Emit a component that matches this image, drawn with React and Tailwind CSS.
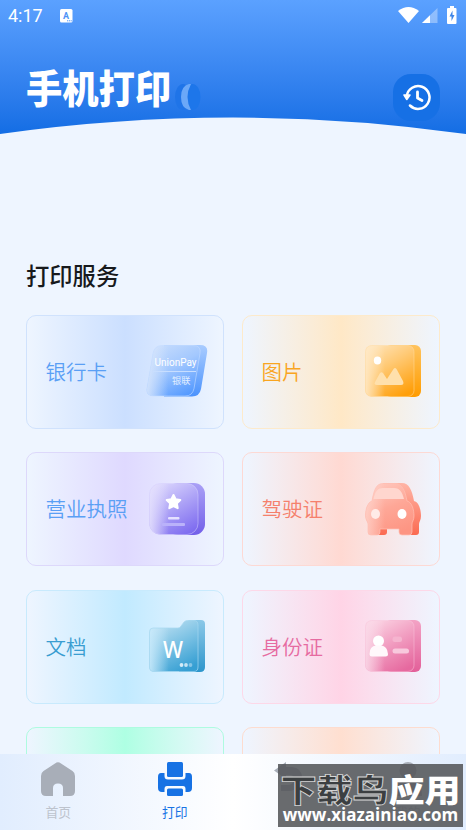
import React from "react"
import clsx from "clsx"

// Icons
function BankCardIcon() {
  return (
    <svg width="62" height="54" viewBox="0 0 62 54">
      <defs>
        <linearGradient id="bankBack" x1="0" y1="0" x2="0" y2="1">
          <stop offset="0" stopColor="#a9ccff" />
          <stop offset="1" stopColor="#4c93fd" />
        </linearGradient>
        <linearGradient id="bankFront" x1="0.2" y1="0" x2="0.75" y2="1">
          <stop offset="0" stopColor="#c6dcfd" />
          <stop offset="0.45" stopColor="#a3c8fe" />
          <stop offset="1" stopColor="#5399ff" />
        </linearGradient>
        <linearGradient id="bankFade" x1="0" y1="0" x2="1" y2="0">
          <stop offset="0" stopColor="#dbe8fc" stopOpacity="0.85" />
          <stop offset="0.4" stopColor="#dbe8fc" stopOpacity="0" />
        </linearGradient>
      </defs>
      <path d="M18 1H54Q62.500 1 61 9L55 45Q53.500 52.500 46 52.500H18Z" fill="url(#bankBack)" />
      <path
        d="M16 1.500H47Q55.500 1.500 54 9.500L48 44.500Q46.500 52 39 52H8Q-.5 52 1 44L7 9.500Q8.500 1.500 16 1.500Z"
        fill="url(#bankFront)"
      />
      <path
        d="M16 1.500H47Q55.500 1.500 54 9.500L48 44.500Q46.500 52 39 52H8Q-.5 52 1 44L7 9.500Q8.500 1.500 16 1.500Z"
        fill="url(#bankFade)"
        stroke="#c5dcff"
        strokeWidth=".6"
      />
      <path d="M7 27.500H50" stroke="#c8deff" strokeWidth="1" />
      <text x="8.500" y="21.500" fontSize="10" fill="#fff" textLength="42" lengthAdjust="spacingAndGlyphs" fontFamily="Roboto, sans-serif">
        UnionPay
      </text>
      <text x="26" y="39.500" fontSize="9.200" fill="#e2eeff" fontFamily="'Noto Sans CJK SC', sans-serif">
        银联
      </text>
    </svg>
  )
}

function PictureIcon() {
  return (
    <svg width="56" height="54" viewBox="0 0 56 54">
      <defs>
        <linearGradient id="picBack" x1="0" y1="0" x2="0" y2="1">
          <stop offset="0" stopColor="#ffc35d" />
          <stop offset="1" stopColor="#ff9c00" />
        </linearGradient>
        <linearGradient id="picFront" x1="0.2" y1="0" x2="0.75" y2="1">
          <stop offset="0" stopColor="#ffe2b4" />
          <stop offset="0.4" stopColor="#ffc974" />
          <stop offset="1" stopColor="#ff9f0a" />
        </linearGradient>
        <linearGradient id="picFade" x1="0" y1="0" x2="1" y2="0">
          <stop offset="0" stopColor="#ffe9c6" stopOpacity="0.9" />
          <stop offset="0.4" stopColor="#ffe9c6" stopOpacity="0" />
        </linearGradient>
      </defs>
      <rect x="20" y="1" width="36" height="52" rx="6" fill="url(#picBack)" />
      <rect x=".5" y="1.500" width="48.500" height="51" rx="6" fill="url(#picFront)" />
      <rect x=".5" y="1.500" width="48.500" height="51" rx="6" fill="url(#picFade)" stroke="#ffdca6" strokeWidth=".5" />
      <ellipse cx="12.500" cy="16.500" rx="3.700" ry="4" fill="#fff" />
      <path
        d="M10 38L15 29Q16.500 27.500 18 29L22 35L28.500 25Q30 23 31.500 25L38 37Q39.500 41 36 41H12Q8.500 41 10 38Z"
        fill="#ffe0ac"
      />
    </svg>
  )
}

function LicenseIcon() {
  return (
    <svg width="56" height="54" viewBox="0 0 56 54">
      <defs>
        <linearGradient id="licBack" x1="0" y1="0" x2="0" y2="1">
          <stop offset="0" stopColor="#aaa0f6" />
          <stop offset="1" stopColor="#725fe9" />
        </linearGradient>
        <linearGradient id="licFront" x1="0.2" y1="0" x2="0.75" y2="1">
          <stop offset="0" stopColor="#dcd7fd" />
          <stop offset="0.45" stopColor="#b1a7f7" />
          <stop offset="1" stopColor="#7f6df0" />
        </linearGradient>
        <linearGradient id="licFade" x1="0" y1="0" x2="1" y2="0">
          <stop offset="0" stopColor="#e4e0fd" stopOpacity="0.9" />
          <stop offset="0.4" stopColor="#e4e0fd" stopOpacity="0" />
        </linearGradient>
      </defs>
      <rect x="18" y="1" width="38" height="52" rx="11" fill="url(#licBack)" />
      <rect x=".5" y="1.500" width="48.500" height="51" rx="11" fill="url(#licFront)" />
      <rect x=".5" y="1.500" width="48.500" height="51" rx="11" fill="url(#licFade)" stroke="#d6d0fd" strokeWidth=".5" />
      <path
        d="M24.500 13L26.600 17.300L31.300 18L27.900 21.400L28.700 26.200L24.500 24L20.300 26.200L21.100 21.400L17.700 18L22.400 17.300Z"
        fill="#fff"
        stroke="#fff"
        strokeWidth="2"
        strokeLinejoin="round"
      />
      <rect x="19" y="35" width="11.500" height="2.500" rx="1" fill="#e5e1ff" />
      <rect x="13" y="41" width="23" height="3" rx="1" fill="#bab2fa" />
    </svg>
  )
}

function CarIcon() {
  return (
    <svg width="56" height="54" viewBox="0 0 56 54">
      <defs>
        <linearGradient id="carBack" x1="0" y1="0" x2="0" y2="1">
          <stop offset="0" stopColor="#ffb5a6" />
          <stop offset="1" stopColor="#fb6a51" />
        </linearGradient>
        <linearGradient id="carFront" x1="0.2" y1="0" x2="0.6" y2="1">
          <stop offset="0" stopColor="#ffc9bf" />
          <stop offset="0.5" stopColor="#fea797" />
          <stop offset="1" stopColor="#fd9583" />
        </linearGradient>
        <linearGradient id="carFade" x1="0" y1="0" x2="1" y2="0">
          <stop offset="0" stopColor="#ffd5cd" stopOpacity="0.8" />
          <stop offset="0.4" stopColor="#ffd5cd" stopOpacity="0" />
        </linearGradient>
      </defs>
      <path
        d="M18 1H37C44 1 47 8 49 19C54 20 56 28 56 34C56 38 54 40 54 42V50Q54 53 51 53H43L20 20ZM12 47H22V50Q22 53 19 53H12Z"
        fill="url(#carBack)"
      />
      <path
        d="M18 1.500H30C37 1.500 40 8 42 19C47 20 49 28 49 34C49 38 47 40 47 42V50Q47 53 44 53H37Q34 53 34 50V47H15V50Q15 53 12 53H6Q3 53 3 50V42C3 40 .5 38 .5 33C.5 27 3 20 7 19C9 8 11 1.500 18 1.500Z"
        fill="url(#carFront)"
      />
      <path
        d="M18 1.500H30C37 1.500 40 8 42 19C47 20 49 28 49 34C49 38 47 40 47 42V50Q47 53 44 53H37Q34 53 34 50V47H15V50Q15 53 12 53H6Q3 53 3 50V42C3 40 .5 38 .5 33C.5 27 3 20 7 19C9 8 11 1.500 18 1.500Z"
        fill="url(#carFade)"
        stroke="#ffc0b4"
        strokeWidth=".7"
      />
      <path d="M8.500 17C10 9 13 6 18 6H29C35 6 37 10 39 17H8.500Z" fill="#ffd6ce" />
      <ellipse cx="10.500" cy="32" rx="4.500" ry="5" fill="#ffebe7" />
      <ellipse cx="37" cy="32" rx="4.500" ry="5" fill="#fff" />
    </svg>
  )
}

function DocumentIcon() {
  return (
    <svg width="56" height="54" viewBox="0 0 56 54">
      <defs>
        <linearGradient id="docBack" x1="0" y1="0" x2="0" y2="1">
          <stop offset="0" stopColor="#8bc8e8" />
          <stop offset="1" stopColor="#2d96cc" />
        </linearGradient>
        <linearGradient id="docFront" x1="0.2" y1="0" x2="0.7" y2="1">
          <stop offset="0" stopColor="#c2e2f3" />
          <stop offset="0.5" stopColor="#7cc2e4" />
          <stop offset="1" stopColor="#369fd3" />
        </linearGradient>
        <linearGradient id="docFade" x1="0" y1="0" x2="1" y2="0">
          <stop offset="0" stopColor="#c9eafb" stopOpacity="0.9" />
          <stop offset="0.4" stopColor="#c9eafb" stopOpacity="0" />
        </linearGradient>
      </defs>
      <path d="M40 1H52Q56 1 56 5V48Q56 53 51 53H30L34 6Z" fill="url(#docBack)" />
      <path
        d="M4 9H29Q31 9 32 7L35 3Q36.500 1.500 38 1.500H45Q49 1.500 49 6V48Q49 52.500 45 52.500H5Q.5 52.500 .5 48V13Q.5 9 4 9Z"
        fill="url(#docFront)"
      />
      <path
        d="M4 9H29Q31 9 32 7L35 3Q36.500 1.500 38 1.500H45Q49 1.500 49 6V48Q49 52.500 45 52.500H5Q.5 52.500 .5 48V13Q.5 9 4 9Z"
        fill="url(#docFade)"
        stroke="#a8d9f0"
        strokeWidth=".7"
      />
      <text x="14" y="38.500" fontSize="23.500" fontWeight="500" fill="#fff" textLength="20" lengthAdjust="spacingAndGlyphs" fontFamily="'Noto Sans', sans-serif">
        W
      </text>
      <circle cx="32.500" cy="46" r="1.900" fill="#d4ecf8" />
      <circle cx="37" cy="46" r="1.900" fill="#c4e4f4" />
      <circle cx="41.500" cy="46" r="1.900" fill="#86c5e6" />
    </svg>
  )
}

function IdCardIcon() {
  return (
    <svg width="56" height="54" viewBox="0 0 56 54">
      <defs>
        <linearGradient id="idBack" x1="0" y1="0" x2="0" y2="1">
          <stop offset="0" stopColor="#f3a3c5" />
          <stop offset="1" stopColor="#e35f99" />
        </linearGradient>
        <linearGradient id="idFront" x1="0.2" y1="0" x2="0.75" y2="1">
          <stop offset="0" stopColor="#fbd3e3" />
          <stop offset="0.45" stopColor="#f2a1c3" />
          <stop offset="1" stopColor="#e6699f" />
        </linearGradient>
        <linearGradient id="idFade" x1="0" y1="0" x2="1" y2="0">
          <stop offset="0" stopColor="#fad9e8" stopOpacity="0.9" />
          <stop offset="0.4" stopColor="#fad9e8" stopOpacity="0" />
        </linearGradient>
      </defs>
      <rect x="20" y="1" width="36" height="52" rx="6" fill="url(#idBack)" />
      <rect x=".5" y="1.500" width="48.500" height="51" rx="6" fill="url(#idFront)" />
      <rect x=".5" y="1.500" width="48.500" height="51" rx="6" fill="url(#idFade)" stroke="#f9c6dc" strokeWidth=".5" />
      <circle cx="13.500" cy="22" r="5.500" fill="#fff" />
      <path d="M4.500 35Q4.500 27 11 26.500H16Q22.500 27 23 35Q23 37.500 20.500 37.500H7Q4.500 37.500 4.500 35Z" fill="#fff8fb" />
      <rect x="27.500" y="17.500" width="9.500" height="5.500" rx="2.500" fill="#f5b4cf" />
      <rect x="27.500" y="29.500" width="16.500" height="5" rx="2.500" fill="#f8c9dd" />
    </svg>
  )
}

function HomeIcon() {
  return (
    <svg width="34" height="34" viewBox="0 0 34 34" fill="#a8aeb8">
      <path d="M14 1.500Q17-.8 20 1.500L31.500 9Q34 10.700 34 14V29Q34 34 29 34H22V26Q22 21.500 17 21.500Q12 21.500 12 26V34H5Q0 34 0 29V14Q0 10.700 2.500 9Z" />
    </svg>
  )
}

function PrinterIcon() {
  return (
    <svg width="34" height="34" viewBox="0 0 34 34" fill="#1772e4">
      <rect x="9" y="0" width="16" height="15" rx="1.500" />
      <path d="M3 11H6.500V14Q6.500 17.500 10 17.500H24Q27.500 17.500 27.500 14V11H31Q34 11 34 15V26Q34 30 30 30H27.500V27Q27.500 24 25 24H9Q6.500 24 6.500 27V30H4Q0 30 0 26V15Q0 11 3 11Z" />
      <rect x="9" y="26.500" width="16" height="7.500" rx="1.500" />
    </svg>
  )
}

function ShareIcon() {
  return (
    <svg width="34" height="34" viewBox="0 0 34 34" fill="#a8aeb8">
      <path d="M0 8.500L12 0V5H18Q28 6 28 16Q28 28 15 29H7V23H15Q20 22 20 17Q20 13 16 13H12V17Z" />
    </svg>
  )
}

function UserIcon() {
  return (
    <svg width="34" height="34" viewBox="0 0 34 34" fill="#a8aeb8">
      <circle cx="17" cy="8.500" r="8.500" />
      <path d="M3 34Q3 19 17 19Q31 19 31 34Z" />
    </svg>
  )
}

const services = [
  {
    name: "银行卡",
    icon: <BankCardIcon />,
    border: "border-[#d0e2fd]",
    bg: "from-[#eef5ff] via-[#cbdfff] to-[#eef5ff]",
    text: "text-[#5a9ff5]",
    right: "pr-[15.500px]",
  },
  {
    name: "图片",
    icon: <PictureIcon />,
    border: "border-[#fdeacb]",
    bg: "from-[#eef5ff] via-[#ffe8c6] to-[#eef5ff]",
    text: "text-[#f9a51f]",
    right: "pr-[18.500px]",
  },
  {
    name: "营业执照",
    icon: <LicenseIcon />,
    border: "border-[#ddd8fb]",
    bg: "from-[#eef5ff] via-[#dfd9ff] to-[#eef5ff]",
    text: "text-[#5a9ff5]",
    right: "pr-[18.500px]",
  },
  {
    name: "驾驶证",
    icon: <CarIcon />,
    border: "border-[#fdd9d4]",
    bg: "from-[#eef5ff] via-[#ffd9d2] to-[#eef5ff]",
    text: "text-[#f5806c]",
    right: "pr-[18.500px]",
  },
  {
    name: "文档",
    icon: <DocumentIcon />,
    border: "border-[#c8eafd]",
    bg: "from-[#eef5ff] via-[#c1eaff] to-[#eef5ff]",
    text: "text-[#399dd1]",
    right: "pr-[18.500px]",
  },
  {
    name: "身份证",
    icon: <IdCardIcon />,
    border: "border-[#fdd8e8]",
    bg: "from-[#eef5ff] via-[#ffd4e6] to-[#eef5ff]",
    text: "text-[#e66ba1]",
    right: "pr-[18.500px]",
  },
  {
    border: "border-[#aefbe0]",
    bg: "from-[#eef5ff] via-[#aeffe3] to-[#eef5ff]",
  },
  {
    border: "border-[#fddccf]",
    bg: "from-[#eef5ff] via-[#ffdfd0] to-[#eef5ff]",
  },
]

const tabs = [
  { id: "home", label: "首页", icon: <HomeIcon /> },
  { id: "print", label: "打印", icon: <PrinterIcon />, active: true },
  { id: "share", label: "", icon: <ShareIcon /> },
  { id: "user", label: "我的", icon: <UserIcon /> },
]

function StatusBar() {
  return (
    <div className="flex h-8 items-center justify-between pl-[8px] pr-[9px] text-white">
      <div className="flex items-center gap-[17px]">
        <span className="font-[Roboto] text-[18px] leading-none">4:17</span>
        <svg width="13" height="14" viewBox="0 0 13 14">
          <rect width="12.500" height="13.500" rx="1.500" fill="#fff" />
          <text x="3" y="9.800" fontSize="9" fontWeight="700" fill="#4d94f7" fontFamily="Roboto, sans-serif">
            A
          </text>
          <path d="M7 11.800H12" stroke="#4d94f7" strokeWidth="1" strokeDasharray="1.200 .6" />
        </svg>
      </div>
      <div className="mt-[-2px] flex items-center">
        <svg width="21" height="16" viewBox="0 0 21 16" fill="#fff">
          <path d="M0 4Q10.500-4 21 4L10.500 16Z" />
        </svg>
        <svg className="ml-[3px]" width="16" height="15" viewBox="0 0 16 15" fill="#fff">
          <path d="M15.500 0V15H0Z" opacity=".35" />
          <path d="M8 7.300V15H0Z" />
        </svg>
        <svg className="ml-[9px]" width="10" height="18" viewBox="0 0 10 18">
          <path d="M3 0H7V2H8.500Q9.500 2 9.500 3V17Q9.500 18 8.500 18H1Q0 18 0 17V3Q0 2 1 2H3Z" fill="#fff" />
          <path d="M5.500 4.500L2.500 10.500H4.500V15L7.500 9H5.500Z" fill="#3f86e8" />
        </svg>
      </div>
    </div>
  )
}

function Header() {
  return (
    <header className="relative h-[135px] bg-gradient-to-b from-[#5ba1ff] to-[#126de4]">
      <svg className="absolute bottom-0 left-0" width="466" height="18" viewBox="0 0 466 18">
        <path d="M0 17Q233-16 466 17V18H0Z" fill="#eef5ff" />
      </svg>
      <StatusBar />
      <div className="relative flex items-start justify-between px-[26px] pt-[34px]">
        <div className="flex">
          <h1 className="mt-[-2px] h-[44px] origin-center scale-y-[1.06] whitespace-nowrap text-[36.300px] font-black leading-[44px] text-white">
            手机打印
          </h1>
          <svg className="ml-[4px] mt-[17px]" width="26" height="28" viewBox="0 0 26 28">
            <ellipse cx="8" cy="14" rx="8" ry="13" fill="#1f74e8" />
            <ellipse cx="17.500" cy="14" rx="8" ry="13" fill="#1d76ea" />
            <path d="M14 1Q6 3 6 14Q6 25 14 27H16Q9 14 16 1Z" fill="#6ba8f8" />
          </svg>
        </div>
        <button className="mt-[8px] flex h-[47px] w-[47px] items-center justify-center rounded-[18px] bg-[#1670e5]">
          <svg width="30" height="28" viewBox="0 0 30 28" fill="none" stroke="#fff" strokeWidth="2.500" strokeLinecap="round" strokeLinejoin="round">
            <path d="M4.800 12A11.400 11.400 0 1 1 8 21.500" />
            <path d="M2 11L8 11L4.800 15.500Z" fill="#fff" strokeWidth="1.500" />
            <path d="M15.500 8V14L20 16.500" strokeWidth="2.800" />
          </svg>
        </button>
      </div>
    </header>
  )
}

function ServiceCard({ service }) {
  return (
    <div
      className={clsx(
        "flex h-[114px] items-center justify-between rounded-[10px] border bg-gradient-to-r pl-[18.500px] pb-[1px]",
        service.border,
        service.bg,
        service.right
      )}
    >
      <span className={clsx("text-[20.500px] font-[350]", service.text)}>{service.name}</span>
      {service.icon}
    </div>
  )
}

function TabBar() {
  return (
    <nav className="grid h-[76px] shrink-0 grid-cols-4 bg-gradient-to-r from-[#e1edfe] via-white to-[#e1edfe]">
      {tabs.map((tab) => (
        <div key={tab.id} className="flex flex-col items-center pt-[8px]">
          {tab.icon}
          <span
            className={clsx(
              "mt-[6px] text-[12.800px] leading-[20px]",
              tab.active ? "text-[#1772e4]" : "text-[#bdc3cd]"
            )}
          >
            {tab.label}
          </span>
        </div>
      ))}
    </nav>
  )
}

function Watermark() {
  return (
    <div className="absolute bottom-[3px] right-[3px] flex h-[63px] w-[185px] flex-col items-center bg-[#54575a]/88">
      <div className="mt-[6px] h-[37px] scale-y-[0.88] whitespace-nowrap text-[36px] font-black leading-[37px] text-white">
        <span className="text-[#3c3f41] [-webkit-text-stroke:1px_#d5d5d5]">下载鸟</span>应用
      </div>
      <div className="whitespace-nowrap font-['Open_Sans'] text-[17px] font-bold leading-[16px] text-white">
        www.xiazainiao.com
      </div>
    </div>
  )
}

export default function App() {
  return (
    <div className="relative flex h-[830px] w-[466px] flex-col overflow-hidden bg-[#eef5ff] font-['Noto_Sans_CJK_SC',sans-serif]">
      <Header />
      <main className="min-h-0 flex-1 overflow-hidden px-[26px] pt-[123px]">
        <h2 className="text-[23.300px] font-medium leading-[34px] text-[#17191c]">打印服务</h2>
        <div className="mt-[22.600px] grid grid-cols-2 gap-x-[18px] gap-y-[23.500px]">
          {services.map((service, i) => (
            <ServiceCard key={i} service={service} />
          ))}
        </div>
      </main>
      <TabBar />
      <Watermark />
    </div>
  )
}
